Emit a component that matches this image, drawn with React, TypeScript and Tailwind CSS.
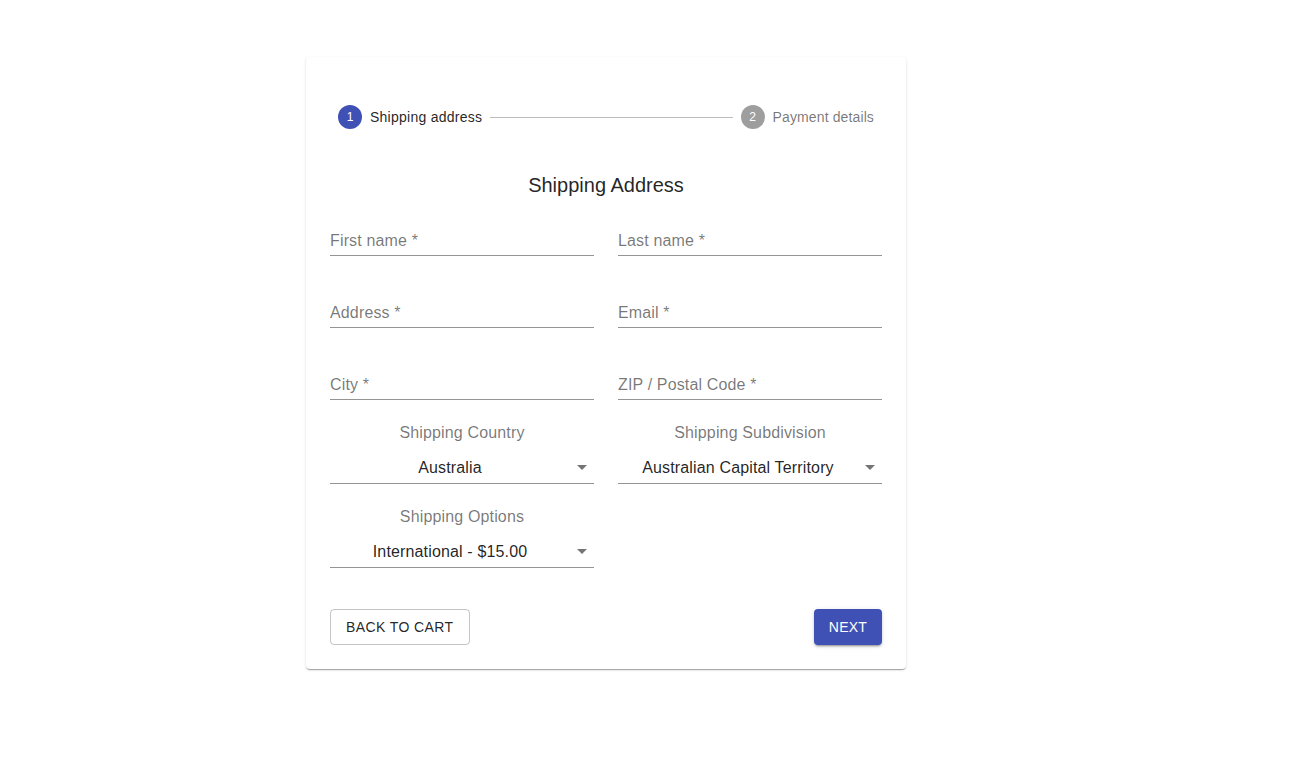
import React from "react";

const font = { fontFamily: '"Liberation Sans", Arial, Helvetica, sans-serif' };

function TextField({ label }: { label: string }) {
  return (
    <div className="relative h-12 border-b border-[rgba(0,0,0,0.42)]">
      <span className="absolute left-0 top-[25px] text-base leading-4 tracking-[0.15px] text-[rgba(0,0,0,0.54)]">
        {label}
      </span>
    </div>
  );
}

function SelectField({ label, value }: { label: string; value: string }) {
  return (
    <div className="flex flex-col">
      <div className="mt-px h-4 text-center text-base leading-4 tracking-[0.15px] text-[rgba(0,0,0,0.54)]">{label}</div>
      <div className="relative mt-[10px] flex h-[33px] items-center justify-center border-b border-[rgba(0,0,0,0.42)] pr-6 pt-px">
        <span className="text-base tracking-[0.15px] text-[rgba(0,0,0,0.87)]">{value}</span>
        <svg className="absolute right-0 top-1 h-6 w-6" viewBox="0 0 24 24" fill="rgba(0,0,0,0.54)">
          <path d="M7 10l5 5 5-5z" />
        </svg>
      </div>
    </div>
  );
}

export default function App() {
  return (
    <div className="min-h-screen bg-white" style={font}>
      <div className="ml-[306px] pt-[57px]">
        <div className="w-[600px] rounded bg-white p-6 shadow-[0px_2px_1px_-1px_rgba(0,0,0,0.2),0px_1px_1px_0px_rgba(0,0,0,0.14),0px_1px_3px_0px_rgba(0,0,0,0.12)]">
          {/* Stepper */}
          <div className="flex items-center px-2 py-6">
            <div className="flex items-center">
              <div className="flex h-6 w-6 items-center justify-center rounded-full bg-[#3f51b5] text-xs text-white">1</div>
              <span className="pl-2 text-sm tracking-[0.25px] text-[rgba(0,0,0,0.87)]">Shipping address</span>
            </div>
            <div className="mx-2 flex-1 border-t border-[#bdbdbd]" />
            <div className="flex items-center">
              <div className="flex h-6 w-6 items-center justify-center rounded-full bg-[rgba(0,0,0,0.38)] text-xs text-white">2</div>
              <span className="pl-2 text-sm tracking-[0.12px] text-[rgba(0,0,0,0.54)]">Payment details</span>
            </div>
          </div>

          <h2 className="mt-4 text-center text-[20px] leading-8 text-[rgba(0,0,0,0.87)]">Shipping Address</h2>

          <div className="mt-[7px] grid grid-cols-2 gap-x-6 gap-y-6">
            <TextField label="First name *" />
            <TextField label="Last name *" />
            <TextField label="Address *" />
            <TextField label="Email *" />
            <TextField label="City *" />
            <TextField label="ZIP / Postal Code *" />
            <SelectField label="Shipping Country" value="Australia" />
            <SelectField label="Shipping Subdivision" value="Australian Capital Territory" />
            <SelectField label="Shipping Options" value="International - $15.00" />
          </div>

          <div className="mt-[41px] flex items-center justify-between">
            <button className="h-9 rounded border border-[rgba(0,0,0,0.23)] px-[15px] text-sm uppercase tracking-[0.4px] text-[rgba(0,0,0,0.87)]">
              Back to cart
            </button>
            <button className="h-9 rounded bg-[#3f51b5] px-[15px] text-sm uppercase tracking-[0.2px] text-white shadow-[0px_3px_1px_-2px_rgba(0,0,0,0.2),0px_2px_2px_0px_rgba(0,0,0,0.14),0px_1px_5px_0px_rgba(0,0,0,0.12)]">
              Next
            </button>
          </div>
        </div>
      </div>
    </div>
  );
}
